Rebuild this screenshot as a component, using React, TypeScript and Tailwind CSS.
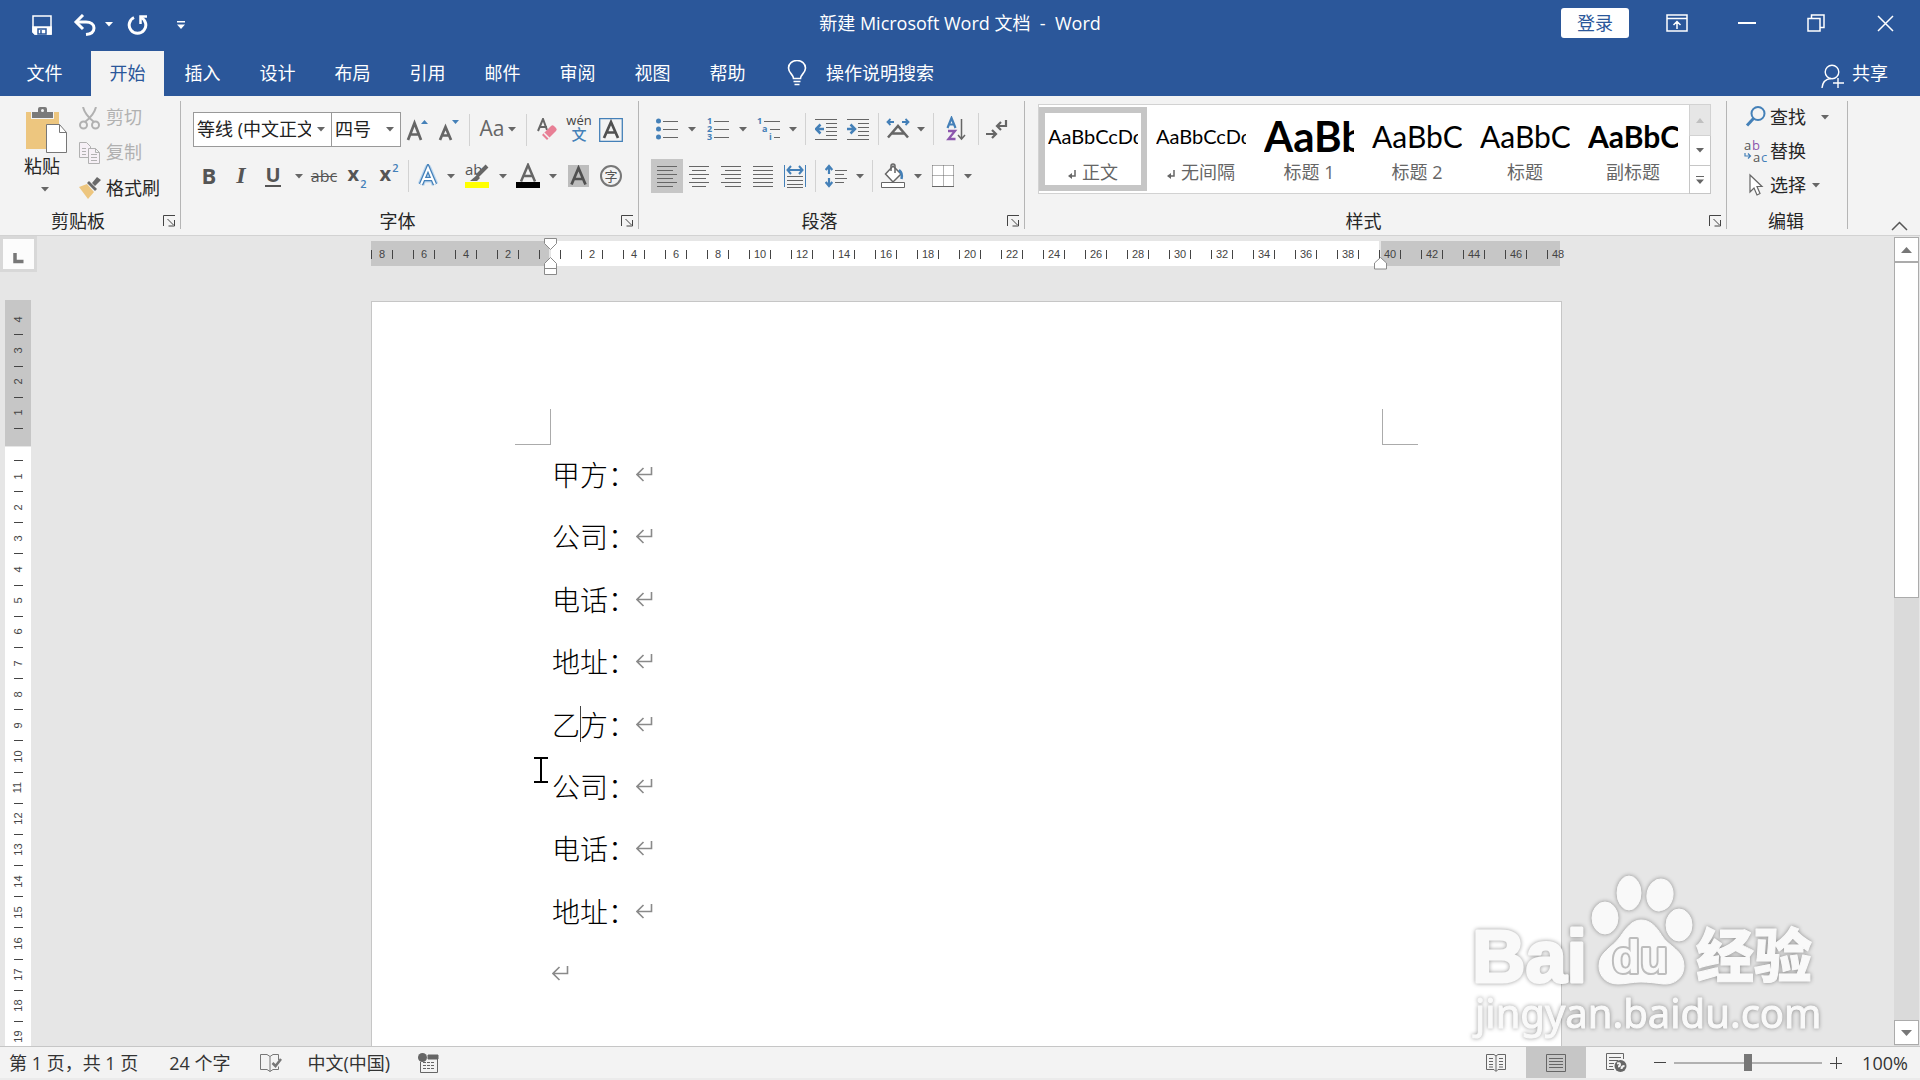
import type { ReactNode } from "react";

const TABS = ["开始", "插入", "设计", "布局", "引用", "邮件", "审阅", "视图", "帮助"];

const PARAGRAPHS = ["甲方：", "公司：", "电话：", "地址：", "乙方：", "公司：", "电话：", "地址：", ""];

const STYLES = [
  { name: "正文", mark: true, sample: "AaBbCcDd", look: "text-[20px]" },
  { name: "无间隔", mark: true, sample: "AaBbCcDd", look: "text-[20px]" },
  { name: "标题 1", mark: false, sample: "AaBb", look: "text-[42px] font-bold" },
  { name: "标题 2", mark: false, sample: "AaBbC", look: "text-[30px]" },
  { name: "标题", mark: false, sample: "AaBbC", look: "text-[30px]" },
  { name: "副标题", mark: false, sample: "AaBbC", look: "text-[30px] font-bold" },
];

// one cell per character unit, numbers on every second one
const H_CELLS = Array.from({ length: 57 }, (_, i) => i - 8);
const V_TOP = [4, 3, 2, 1];
const V_BODY = Array.from({ length: 19 }, (_, i) => i + 1);

const GREY = "#666666";
const BLUE = "#4480b8";

function Caret({ className = "text-[#666666]" }: { className?: string }) {
  return (
    <svg width="8" height="5" viewBox="0 0 8 5" className={className} aria-hidden="true">
      <path d="M0 0h8L4 4.5z" fill="currentColor" />
    </svg>
  );
}

function Tool({ label, w = "w-8", active = false, children }: { label: string; w?: string; active?: boolean; children: ReactNode }) {
  return (
    <button
      type="button"
      aria-label={label}
      className={`flex h-[34px] shrink-0 items-center justify-center ${w} ${active ? "bg-[#c6c6c6]" : "hover:bg-[#d5d5d5]"}`}
    >
      {children}
    </button>
  );
}

function More({ label, w = "w-4" }: { label: string; w?: string }) {
  return (
    <Tool label={`${label}选项`} w={w}>
      <Caret />
    </Tool>
  );
}

function Sep() {
  return <span className="mx-1 h-8 w-px shrink-0 bg-[#d2d2d2]" />;
}

function Icon({ children, w = 24, h = 24 }: { children: ReactNode; w?: number; h?: number }) {
  return (
    <svg width={w} height={h} viewBox={`0 0 ${w} ${h}`} fill="none" stroke={GREY} strokeWidth="1.5" aria-hidden="true" className="shrink-0">
      {children}
    </svg>
  );
}

// horizontal text lines given as [x1, x2, y]
function Lines({ rows }: { rows: number[][] }) {
  return <path d={rows.map(([a, b, y]) => `M${a} ${y}H${b}`).join("")} strokeWidth="1" shapeRendering="crispEdges" />;
}

function Group({ title, width, launcher = true, children }: { title: string; width: string; launcher?: boolean; children: ReactNode }) {
  return (
    <section aria-label={title} className={`flex h-32 flex-col border-r border-[#b5b5b5] ${width}`}>
      <div className="flex-1">{children}</div>
      <div className="flex h-4 items-center">
        <h2 className="flex-1 pr-0.5 text-center leading-4">{title}</h2>
        {launcher && (
          <button type="button" aria-label={`${title}设置`} className="flex w-[22px] justify-center">
            <svg width="13" height="12" viewBox="0 0 13 12" fill="none" stroke="#444" aria-hidden="true">
              <path d="M.5 11V.5H12M4.500 4l6 6M11.500 5v6H5.500" />
            </svg>
          </button>
        )}
      </div>
    </section>
  );
}

function TitleBar() {
  return (
    <div className="flex h-[51px] items-center text-white">
      <div className="flex flex-1 items-center pb-2.5">
        <div className="flex items-center pt-2 pl-8">
          <button type="button" aria-label="保存">
            <svg width="20" height="20" viewBox="0 0 20 20" fill="none" stroke="white" strokeWidth="1.5" aria-hidden="true">
              <path d="M1 1h18v18H3l-2-2z" />
              <path d="M1 12h18v7H3l-2-2z" fill="white" />
              <path d="M6 14h8v5H6zM9 15v4" stroke="#2b579a" strokeWidth="1.500" />
            </svg>
          </button>
          <button type="button" aria-label="撤消" className="ml-[21px]">
            <svg width="24" height="22" viewBox="0 0 24 22" fill="none" stroke="white" strokeWidth="3" aria-hidden="true">
              <path d="M3 8h10c5 0 8 2.500 8 6 0 4-3 6-8 6.500" />
              <path d="M10 1L3 8l7 7" />
            </svg>
          </button>
          <button type="button" aria-label="撤消选项" className="ml-2">
            <Caret className="text-white" />
          </button>
          <button type="button" aria-label="恢复" className="ml-3.5">
            <svg width="22" height="22" viewBox="0 0 22 22" fill="none" stroke="white" strokeWidth="3" aria-hidden="true">
              <path d="M7 3.500A8.300 8.300 0 1 0 14 3.500" />
              <path d="M20 2.500h-6.500V10" strokeWidth="2.500" />
            </svg>
          </button>
          <button type="button" aria-label="自定义快速访问工具栏" className="ml-7">
            <svg width="8" height="8" viewBox="0 0 8 8" fill="white" aria-hidden="true">
              <path d="M0 0h8v1.500H0zM0 3.500h8L4 8z" />
            </svg>
          </button>
        </div>
      </div>
      <h1 className="pb-1.5 text-lg whitespace-pre">新建 Microsoft Word 文档  -  Word</h1>
      <div className="flex flex-1 items-center justify-end pb-[5px]">
        <button type="button" className="h-[30px] w-[68px] rounded-[3px] bg-white text-lg leading-7 text-[#2b579a]">
          登录
        </button>
        <button type="button" aria-label="功能区显示选项" className="ml-[37px]">
          <svg width="22" height="18" viewBox="0 0 22 18" fill="none" stroke="white" strokeWidth="1.500" aria-hidden="true">
            <path d="M1 1h20v16H1zM1 4.500h20M11 15V7.500M7.500 11L11 7.500l3.500 3.500" />
          </svg>
        </button>
        <button type="button" aria-label="最小化" className="ml-[50px] flex h-6 w-[18px] items-center">
          <span className="h-[2px] w-full bg-white" />
        </button>
        <button type="button" aria-label="向下还原" className="ml-[51px]">
          <svg width="18" height="18" viewBox="0 0 18 18" fill="none" stroke="white" strokeWidth="1.500" aria-hidden="true">
            <path d="M1 4.500h12V17H1zM4.500 4.500V1H17v12.500h-4" />
          </svg>
        </button>
        <button type="button" aria-label="关闭" className="ml-[52px]">
          <svg width="17" height="17" viewBox="0 0 17 17" stroke="white" strokeWidth="1.500" aria-hidden="true">
            <path d="M1 1l15 15M16 1L1 16" />
          </svg>
        </button>
        <span className="w-[26px]" />
      </div>
    </div>
  );
}

function TabBar() {
  return (
    <nav aria-label="功能区选项卡" className="flex h-[45px] gap-0.5 text-lg text-white">
      <button type="button" className="w-[89px] pb-0.5">文件</button>
      {TABS.map((t, i) => (
        <button key={t} type="button" className={`w-[73px] pb-0.5 ${i === 0 ? "bg-[#f3f3f3] text-[#2b579a]" : ""}`}>
          {t}
        </button>
      ))}
      <button type="button" className="ml-[21px] flex items-center gap-[19px] pb-0.5">
        <svg width="20" height="26" viewBox="0 0 20 26" fill="none" stroke="white" strokeWidth="1.600" aria-hidden="true">
          <path d="M6.500 18.500c0-4-5-5.500-5-10.500a8.500 7.500 0 0 1 17 0c0 5-5 6.500-5 10.500zM6.500 21.500h7M7.500 24.500h5" />
        </svg>
        操作说明搜索
      </button>
      <button type="button" className="mr-8 ml-auto flex items-center gap-2 pb-0.5">
        <svg width="23" height="25" viewBox="0 0 23 25" fill="none" stroke="white" strokeWidth="1.400" aria-hidden="true" className="mt-2">
          <circle cx="11" cy="8" r="6.800" />
          <path d="M1 24c.5-6 3.500-9 9-9.500M17 14v10M12 19h11" />
        </svg>
        共享
      </button>
    </nav>
  );
}

function ClipboardGroup() {
  return (
    <Group title="剪贴板" width="w-[181px]">
      <div className="flex pt-1.5">
        <button type="button" className="ml-[23px] flex w-[46px] shrink-0 flex-col items-start">
          <svg width="44" height="46" viewBox="0 0 44 46" aria-hidden="true" className="ml-[3px]">
            <path d="M0 5h33v37H0z" fill="#edc67f" />
            <path d="M5 4h23v8H5z" fill="#f3f3f3" />
            <path d="M6 5h6V2q0-2 2-2h5q2 0 2 2v3h6v6H6z" fill="#7a7a7a" />
            <circle cx="16.500" cy="3.500" r="1.500" fill="#f3f3f3" />
            <path d="M20.500 17.500h13l7 8v20h-20z" fill="white" stroke="#777" />
            <path d="M33.500 17.500v8h7" fill="none" stroke="#777" />
          </svg>
          <span className="ml-px leading-[27px]">粘贴</span>
          <span className="ml-[18px] flex h-[18px] items-center">
            <Caret />
          </span>
        </button>
        <div className="ml-2.5 flex flex-col">
          <button type="button" disabled className="flex h-[35px] items-start gap-1.5 text-[#b1b1b1]">
            <svg width="21" height="23" viewBox="0 0 21 23" fill="none" stroke="#b1b1b1" strokeWidth="2" aria-hidden="true">
              <circle cx="4.500" cy="18" r="3.500" />
              <circle cx="16.500" cy="18" r="3.500" />
              <path d="M4 0q2 8 11 15M17 0q-2 8-11 15" />
            </svg>
            <span className="leading-5">剪切</span>
          </button>
          <button type="button" disabled className="flex h-[35px] items-start gap-1.5 text-[#b1b1b1]">
            <svg width="21" height="23" viewBox="0 0 21 23" fill="#f6f0f6" stroke="#b1b1b1" aria-hidden="true">
              <path d="M.5.5h7l4 4v11H.5zM3 6.500h4M3 9.500h4M3 12.500h4" />
              <path d="M9.500 6.500h7l4 4v11h-11zM16.500 6.500v4h4M12 12.500h6M12 15.500h6M12 18.500h6" />
            </svg>
            <span className="leading-5">复制</span>
          </button>
          <button type="button" className="flex h-[35px] items-start gap-[5px]">
            <svg width="22" height="23" viewBox="0 0 22 23" aria-hidden="true">
              <path d="M0 10l8-3 7 8-6 7z" fill="#edc67f" />
              <path d="M8 6l8 8 2-2-8-8zM13 6l5-6 4 3-6 6z" fill="#6a6a6a" />
            </svg>
            <span className="leading-[22px]">格式刷</span>
          </button>
        </div>
      </div>
    </Group>
  );
}

function Combo({ label, value, width }: { label: string; value: string; width: string }) {
  return (
    <div className={`relative h-[35px] shrink-0 ${width}`}>
      <select aria-label={label} className="h-full w-full appearance-none border border-[#999999] bg-white pr-5 pb-0.5 pl-[3px] text-[#222222]">
        <option>{value}</option>
      </select>
      <span className="pointer-events-none absolute top-[15px] right-[7px] flex">
        <Caret />
      </span>
    </div>
  );
}

function FontGroup() {
  return (
    <Group title="字体" width="w-[458px]">
      <div className="flex flex-col gap-3 pt-[11px] pl-3">
        <div className="flex items-center">
          <Combo label="字体名称" value="等线 (中文正文)" width="w-[139px]" />
          <Combo label="字号" value="四号" width="-ml-px w-[70px]" />
          <Tool label="增大字号">
            <Icon>
              <path d="M3 22L9.500 5 16 22M5.500 16.500h8.500" strokeWidth="2.700" />
              <path d="M16 6l3.500-4L23 6z" fill={BLUE} stroke="none" />
            </Icon>
          </Tool>
          <Tool label="减小字号">
            <Icon>
              <path d="M3 22L8.500 9 14 22M5.500 17.500h6.500" strokeWidth="2.700" />
              <path d="M15 2l3.500 4L22 2z" fill={BLUE} stroke="none" />
            </Icon>
          </Tool>
          <Sep />
          <Tool label="更改大小写" w="w-12">
            <span className="mr-1 pb-1 text-[21px] leading-6 text-[#666666]">Aa</span>
            <Caret />
          </Tool>
          <Sep />
          <Tool label="清除所有格式">
            <Icon w={22}>
              <path d="M2 13L7 1l4 11M4 9h7" strokeWidth="2" />
              <path d="M6 17L15 8q1.500-1.500 3 0l2 2q1.500 1.500 0 3L11 22z" fill="#e87f95" stroke="none" />
              <path d="M8 15l6 6" stroke="#f3f3f3" />
            </Icon>
          </Tool>
          <Tool label="拼音指南">
            <span className="flex flex-col items-center pb-1">
              <span className="text-[13px] leading-[13px] text-[#444444]">wén</span>
              <span className="text-[15px] leading-[15px] font-medium text-[#4480b8]">文</span>
            </span>
          </Tool>
          <Tool label="字符边框">
            <Icon>
              <path d="M.7.7h22.600v22.600H.7z" stroke={BLUE} strokeWidth="1.300" />
              <path d="M5 20L12 4l7 16M8 14.500h8" stroke="#505050" strokeWidth="2.700" />
            </Icon>
          </Tool>
        </div>
        <div className="flex items-center text-[#555555]">
          <Tool label="加粗">
            <b className="pb-0.5 text-[22px]">B</b>
          </Tool>
          <Tool label="倾斜">
            <i className="pb-0.5 font-['Liberation_Serif',serif] text-[24px] font-bold">I</i>
          </Tool>
          <Tool label="下划线">
            <span className="border-b-2 border-[#555555] text-[20px] leading-[20px] font-bold">U</span>
          </Tool>
          <More label="下划线" w="w-[19px]" />
          <Tool label="删除线">
            <s className="text-[16px]">abc</s>
          </Tool>
          <Tool label="下标">
            <span className="pb-1 pl-0.5 text-[20px] font-bold">x</span>
            <span className="mt-4 ml-px text-[11px] leading-4 font-semibold text-[#4480b8]">2</span>
          </Tool>
          <Tool label="上标">
            <span className="pb-1 pl-0.5 text-[20px] font-bold">x</span>
            <span className="mb-4 ml-px text-[11px] leading-4 font-semibold text-[#4480b8]">2</span>
          </Tool>
          <Sep />
          <Tool label="文本效果" w="w-[30px]">
            <Icon>
              <path d="M5 20.500L12 4l7 16.500M7.500 15h9" stroke="#bcd6ee" strokeWidth="7" strokeLinejoin="round" />
              <path d="M5 20.500L12 4l7 16.500M7.500 15h9" stroke={BLUE} strokeWidth="4.500" />
              <path d="M5 20.500L12 4l7 16.500M7.500 15h9" stroke="white" strokeWidth="2" />
            </Icon>
          </Tool>
          <More label="文本效果" />
          <Tool label="突出显示" w="w-9">
            <Icon w={24} h={26}>
              <text x="0" y="12" fontSize="15" fill="#555" stroke="none">ab</text>
              <path d="M22 3L12 13" strokeWidth="4" />
              <path d="M12 12l3 3-3 3H5z" fill={GREY} stroke="none" />
              <path d="M0 19h24v6H0z" fill="#ffff00" stroke="none" />
            </Icon>
          </Tool>
          <More label="突出显示" />
          <Tool label="字体颜色" w="w-[34px]">
            <Icon w={24} h={26}>
              <path d="M5 18.500L12 2l7 16.500M8 13h8" strokeWidth="2.500" />
              <path d="M0 19h24v6H0z" fill="black" stroke="none" />
            </Icon>
          </Tool>
          <More label="字体颜色" />
          <Tool label="字符底纹" w="w-[34px]">
            <Icon w={21} h={22}>
              <path d="M0 0h21v22H0z" fill="#bdbdbd" stroke="none" />
              <path d="M3.500 19.500L10.500 3l7 16.500M6 14h9" stroke="#505050" strokeWidth="2.700" />
            </Icon>
          </Tool>
          <Tool label="带圈字符">
            <span className="flex h-[22px] w-[22px] items-center justify-center rounded-full border-2 border-[#777777] text-[13px] leading-[14px]">
              字
            </span>
          </Tool>
        </div>
      </div>
    </Group>
  );
}

function ParagraphGroup() {
  return (
    <Group title="段落" width="w-[386px]">
      <div className="flex flex-col gap-[13px] pt-[11px] pl-3">
        <div className="flex items-center">
          <Tool label="项目符号">
            <Icon w={22}>
              <g fill={BLUE} stroke="none">
                <circle cx="2.500" cy="4" r="2.500" />
                <circle cx="2.500" cy="12" r="2.500" />
                <circle cx="2.500" cy="20" r="2.500" />
              </g>
              <Lines rows={[[7, 22, 4], [7, 22, 12], [7, 22, 20]]} />
            </Icon>
          </Tool>
          <More label="项目符号" w="w-[18px]" />
          <Tool label="编号" w="w-[34px]">
            <Icon w={22}>
              <g fill={BLUE} stroke="none" fontSize="9" fontWeight="700">
                <text x="0" y="7">1</text>
                <text x="0" y="15">2</text>
                <text x="0" y="23">3</text>
              </g>
              <Lines rows={[[7, 22, 4], [7, 22, 12], [7, 22, 20]]} />
            </Icon>
          </Tool>
          <More label="编号" />
          <Tool label="多级列表" w="w-[34px]">
            <Icon w={23}>
              <g fill={BLUE} stroke="none" fontSize="9" fontWeight="700">
                <text x="0" y="7">1</text>
                <text x="5" y="15">a</text>
                <text x="12" y="23">i</text>
              </g>
              <Lines rows={[[7, 23, 4], [13, 23, 12], [17, 23, 20]]} />
            </Icon>
          </Tool>
          <More label="多级列表" />
          <Sep />
          <Tool label="减少缩进量">
            <Icon w={22}>
              <Lines rows={[[0, 22, 2], [11, 22, 6], [11, 22, 10], [11, 22, 14], [11, 22, 18], [0, 22, 22]]} />
              <path d="M9 12H1M5.500 7.500L1 12l4.500 4.500" stroke={BLUE} strokeWidth="2.500" />
            </Icon>
          </Tool>
          <Tool label="增加缩进量">
            <Icon w={22}>
              <Lines rows={[[0, 22, 2], [11, 22, 6], [11, 22, 10], [11, 22, 14], [11, 22, 18], [0, 22, 22]]} />
              <path d="M0 12h8M3.500 7.500L8 12l-4.500 4.500" stroke={BLUE} strokeWidth="2.500" />
            </Icon>
          </Tool>
          <Sep />
          <Tool label="中文版式" w="w-[30px]">
            <Icon>
              <path d="M2 20.500L12 9l10 11.500M6 16.500h12" strokeWidth="2.500" />
              <path d="M8 5H1.500M4.500 2l-3 3 3 3M16 5h6.500M19.500 2l3 3-3 3" stroke={BLUE} strokeWidth="1.800" />
            </Icon>
          </Tool>
          <More label="中文版式" />
          <Sep />
          <Tool label="排序" w="w-9">
            <Icon w={20} h={26}>
              <path d="M1.500 12L5.500 2l4 10M3 8.500h5" stroke={BLUE} strokeWidth="2.200" />
              <path d="M2 15h7L2.500 23H9.500" stroke="#8c56ad" strokeWidth="2.300" />
              <path d="M15.500 3v20M12 19l3.500 4 3.500-4" strokeWidth="1.500" />
            </Icon>
          </Tool>
          <Sep />
          <Tool label="显示编辑标记" w="w-7">
            <Icon w={22}>
              <path d="M20 3v6h-8M15 5l-4 4 4 4" strokeWidth="2.200" />
              <path d="M0 17h9M6 13l4 4-4 4" strokeWidth="2.200" />
            </Icon>
          </Tool>
        </div>
        <div className="flex items-center">
          <Tool label="左对齐" active>
            <Icon w={20}>
              <Lines rows={[[0, 20, 2], [0, 16, 6], [0, 20, 10], [0, 16, 14], [0, 20, 18], [0, 16, 22]]} />
            </Icon>
          </Tool>
          <Tool label="居中">
            <Icon w={20}>
              <Lines rows={[[0, 20, 2], [3, 17, 6], [0, 20, 10], [3, 17, 14], [0, 20, 18], [3, 17, 22]]} />
            </Icon>
          </Tool>
          <Tool label="右对齐">
            <Icon w={20}>
              <Lines rows={[[0, 20, 2], [4, 20, 6], [0, 20, 10], [4, 20, 14], [0, 20, 18], [4, 20, 22]]} />
            </Icon>
          </Tool>
          <Tool label="两端对齐">
            <Icon w={20}>
              <Lines rows={[[0, 20, 2], [0, 20, 6], [0, 20, 10], [0, 20, 14], [0, 20, 18], [0, 20, 22]]} />
            </Icon>
          </Tool>
          <Tool label="分散对齐">
            <Icon w={22}>
              <path d="M.5 1v22M21.500 1v22" stroke={BLUE} strokeWidth="1" />
              <path d="M4 6h14M7 2L3.500 6 7 10M15 2l3.500 4L15 10" stroke={BLUE} strokeWidth="2" />
              <Lines rows={[[3, 19, 12], [3, 19, 16], [3, 19, 20], [3, 19, 23]]} />
            </Icon>
          </Tool>
          <Sep />
          <Tool label="行距">
            <Icon w={22}>
              <path d="M4 3v7M.7 6L4 2l3.300 4M4 14v7M.7 18L4 22l3.300-4" stroke={BLUE} strokeWidth="2.200" />
              <Lines rows={[[10, 22, 6], [10, 19, 10], [10, 22, 14], [10, 19, 18]]} />
            </Icon>
          </Tool>
          <More label="行距" />
          <Sep />
          <Tool label="底纹">
            <Icon h={26}>
              <path d="M12 3l8 8-8 8-7.500-8z" fill="white" />
              <path d="M10 8V3q0-2 2-2t2 2v7" />
              <path d="M18 7q4 3 2.500 9" stroke={BLUE} strokeWidth="2.500" />
              <path d="M.5 19.500h23v5H.5z" fill="white" strokeWidth="1" />
            </Icon>
          </Tool>
          <More label="底纹" w="w-[18px]" />
          <Tool label="边框">
            <Icon w={22}>
              <path d="M.5 1.500h21v21H.5z" fill="white" stroke="none" />
              <path d="M.5 1.500h21M.5 11.500h21M.5 1.500v21M11.500 1.500v21M21.500 1.500v21" strokeWidth="1" strokeDasharray="1 1" />
              <path d="M0 22.500h22" strokeWidth="1" />
            </Icon>
          </Tool>
          <More label="边框" w="w-[18px]" />
        </div>
      </div>
    </Group>
  );
}

function StylesGroup() {
  return (
    <Group title="样式" width="min-w-0 flex-1">
      <div className="flex pt-[3px] pr-[15px] pl-[13px]">
        <div className="flex h-[90px] min-w-0 flex-1 overflow-hidden border border-r-0 border-[#d2d2d2] bg-white py-0.5">
          {STYLES.map((s, i) => (
            <button
              key={s.name}
              type="button"
              aria-pressed={i === 0}
              className={`flex w-[108px] shrink-0 flex-col items-center border-[6px] ${i === 0 ? "border-[#c6c6c6]" : "border-transparent"}`}
            >
              <span className={`flex h-[46px] w-[90px] items-center overflow-hidden font-['Lato',sans-serif] whitespace-nowrap text-black ${s.look}`}>
                {s.sample}
              </span>
              <span className="flex items-center gap-1.5 leading-[26px] text-[#666666]">
                {s.mark && (
                  <svg width="8" height="12" viewBox="0 0 8 12" fill="none" stroke="#666" strokeWidth="1.500" aria-hidden="true" className="mt-1.5">
                    <path d="M7 1v6H2" />
                    <path d="M4 4v6L0 7z" fill="#666" stroke="none" />
                  </svg>
                )}
                {s.name}
              </span>
            </button>
          ))}
        </div>
        <div className="flex w-[22px] flex-col">
          <button type="button" disabled aria-label="上一行" className="flex h-8 items-center justify-center border border-[#d2d2d2] bg-[#e6e6e6]">
            <svg width="8" height="5" viewBox="0 0 8 5" fill="#c0c0c0" aria-hidden="true">
              <path d="M0 5h8L4 0z" />
            </svg>
          </button>
          <button type="button" aria-label="下一行" className="flex h-[29px] items-center justify-center border-x border-[#c6c6c6] bg-white">
            <Caret />
          </button>
          <button type="button" aria-label="其他样式" className="flex h-[29px] items-center justify-center border border-[#c6c6c6] bg-white">
            <svg width="8" height="8" viewBox="0 0 8 8" fill="#666" aria-hidden="true">
              <path d="M0 0h8v1H0zM0 3.500h8L4 8z" />
            </svg>
          </button>
        </div>
      </div>
    </Group>
  );
}

function EditGroup() {
  return (
    <Group title="编辑" width="w-[121px]" launcher={false}>
      <div className="flex flex-col items-start pl-[17px]">
        <button type="button" className="flex h-[34px] items-center pb-0.5">
          <Icon>
            <circle cx="14" cy="8.500" r="6.500" stroke={BLUE} strokeWidth="2" />
            <path d="M9.500 13.500L3 20.500" stroke={BLUE} strokeWidth="3" />
          </Icon>
          <span className="mr-[15px] ml-0.5">查找</span>
          <Caret />
        </button>
        <button type="button" className="flex h-[34px] items-center pb-0.5">
          <Icon>
            <g fontSize="13" stroke="none" fill="#555">
              <text x="0" y="11">a</text>
              <text x="8" y="11" fill="#8c56ad">b</text>
              <text x="9" y="23">a</text>
              <text x="17" y="23" fill={BLUE}>c</text>
            </g>
            <path d="M1 14v3h5M4 14.500l2.500 2.500L4 19.500" stroke={BLUE} strokeWidth="1.200" />
          </Icon>
          <span className="ml-0.5">替换</span>
        </button>
        <button type="button" className="flex h-[34px] items-center pb-0.5">
          <Icon>
            <path d="M6 2v17l4-4 3 7 3-1.500-3-7h5z" fill="white" strokeWidth="1.200" />
          </Icon>
          <span className="mr-1.5 ml-0.5">选择</span>
          <Caret />
        </button>
      </div>
    </Group>
  );
}

function HRuler() {
  return (
    <div className="relative mx-auto mt-[5px] grid h-[25px] w-[1191px] shrink-0">
      <div className="col-start-1 row-start-1 flex">
        <div className="w-[178px] bg-[#c6c6c6]" />
        <div className="ml-0.5 w-[828px] bg-white" />
        <div className="ml-0.5 w-[179px] bg-[#c6c6c6]" />
      </div>
      <div className="col-start-1 row-start-1 flex items-center pt-0.5 font-['Liberation_Sans',sans-serif] text-[11px] leading-[9px] text-[#444444]">
        {H_CELLS.map((n) => (
          <span key={n} className="flex h-[9px] w-[21px] shrink-0 justify-center border-l border-[#444444]">
            {n !== 0 && n % 2 === 0 ? Math.abs(n) : ""}
          </span>
        ))}
      </div>
      <svg width="13" height="38" viewBox="0 0 13 38" fill="white" stroke="#8a8a8a" className="absolute -top-[3px] left-[173px]" aria-hidden="true">
        <path d="M.5.500h12v5l-6 6-6-6zM.5 36.500v-11l6-6 6 6v11zM.5 30.500h12" />
      </svg>
      <svg width="13" height="13" viewBox="0 0 13 13" fill="white" stroke="#8a8a8a" className="absolute -bottom-1 left-[1003px]" aria-hidden="true">
        <path d="M.5 12v-6l6-5.500 6 5.500v6z" />
      </svg>
    </div>
  );
}

function VCell({ n }: { n: number }) {
  return (
    <span className="flex min-h-0 flex-1 items-center justify-center">
      <span className="-rotate-90">{n}</span>
    </span>
  );
}

function VTick() {
  return <span className="mx-auto h-px w-[9px] shrink-0 bg-[#444444]" />;
}

function VRuler() {
  return (
    <div className="flex w-[39px] shrink-0 flex-col overflow-hidden">
      <button type="button" aria-label="制表符" className="h-9 w-[37px] shrink-0 border-[3px] border-[#d8d8d8] bg-[#fcfcfc]">
        <svg width="31" height="28" viewBox="0 0 31 28" fill="none" stroke="#777" strokeWidth="3.500" aria-hidden="true">
          <path d="M12 13v8.500h8.500" />
        </svg>
      </button>
      <div className="mt-7 ml-[5px] flex min-h-0 w-[26px] flex-1 flex-col font-['Liberation_Sans',sans-serif] text-[11px] leading-none text-[#444444]">
        <div className="flex h-[146px] shrink-0 flex-col bg-[#c6c6c6] pt-1 pb-[17px]">
          {V_TOP.map((n) => (
            <div key={n} className="flex flex-1 flex-col">
              <VCell n={n} />
              <VTick />
            </div>
          ))}
        </div>
        <div className="mt-px flex min-h-0 flex-1 flex-col bg-white pt-[13px]">
          <div className="-mb-1.5 flex min-h-0 flex-1 flex-col">
            {V_BODY.map((n) => (
              <div key={n} className="flex min-h-0 flex-1 flex-col">
                <VTick />
                <VCell n={n} />
              </div>
            ))}
          </div>
        </div>
      </div>
    </div>
  );
}

function Page() {
  return (
    <article className="relative mx-auto mt-[35px] min-h-0 w-[1191px] flex-1 overflow-hidden border border-b-0 border-[#c6c6c6] bg-white px-[143px]">
      <div className="flex h-[143px] items-end justify-between">
        <span className="h-9 w-9 border-r border-b border-[#ababab]" />
        <span className="h-9 w-9 border-b border-l border-[#ababab]" />
      </div>
      <div className="-mt-0.5 flex h-[561px] flex-col justify-between pl-[37px] font-['Noto_Sans_CJK_SC',sans-serif] text-[28px] leading-[62px] font-light text-black">
        {PARAGRAPHS.map((text, i) => (
          <p key={i} className="flex h-[62px] items-center">
            {i === 4 ? (
              <>
                {text[0]}
                <span className="-mr-px h-9 w-px bg-[#444444]" />
                {text.slice(1)}
              </>
            ) : (
              text
            )}
            <svg width="17" height="16" viewBox="0 0 17 16" fill="none" stroke="#8a8a8a" strokeWidth="1.600" aria-hidden="true">
              <path d="M15.500 1v7.500H1M7.500 2L1 8.500 7.500 15" />
            </svg>
          </p>
        ))}
      </div>
      <svg width="14" height="26" viewBox="0 0 14 26" stroke="black" strokeWidth="2" fill="none" className="absolute top-[455px] left-[162px]" aria-hidden="true">
        <path d="M0 1h14M0 25h14M7 1v24" />
      </svg>
    </article>
  );
}

function ScrollBar() {
  return (
    <div className="mt-px mr-px flex w-[25px] flex-col bg-[#dadada]">
      <button type="button" aria-label="向上滚动" className="flex h-[25px] items-center justify-center border border-[#ababab] bg-white">
        <svg width="11" height="6" viewBox="0 0 11 6" fill="#777" aria-hidden="true">
          <path d="M0 6h11L5.500 0z" />
        </svg>
      </button>
      <div className="h-[336px] border border-[#ababab] bg-white" />
      <button type="button" aria-label="向下滚动" className="mt-auto mb-px flex h-[25px] items-center justify-center border border-[#ababab] bg-white">
        <svg width="11" height="6" viewBox="0 0 11 6" fill="#777" aria-hidden="true">
          <path d="M0 0h11L5.500 6z" />
        </svg>
      </button>
    </div>
  );
}

function Watermark() {
  return (
    <svg
      width="370"
      height="175"
      viewBox="0 0 370 175"
      fill="#f9f9f9"
      stroke="#f9f9f9"
      strokeWidth="1"
      strokeLinejoin="round"
      className="pointer-events-none absolute right-[90px] bottom-[35px] drop-shadow-[0_0_2px_rgba(0,0,0,0.4)]"
      aria-hidden="true"
    >
      <text x="12" y="112" fontSize="74" fontWeight="700" fontFamily="Liberation Sans" strokeWidth="3">Bai</text>
      <ellipse cx="145" cy="48" rx="13" ry="16" />
      <ellipse cx="169" cy="23" rx="12" ry="17" />
      <ellipse cx="200" cy="25" rx="13" ry="16" transform="rotate(10 200 25)" />
      <ellipse cx="219" cy="55" rx="13" ry="16" />
      <path d="M181 50C190 50 196 56 202 66C208 76 224 80 224 96C224 108 214 115 203 114C195 113 188 112 181 112C172 112 166 114 158 114C146 114 139 106 139 96C139 82 152 78 160 67C166 58 172 50 181 50Z" />
      <text x="152" y="103" fontSize="46" fontWeight="700" fontFamily="Liberation Sans" stroke="#bdbdbd" strokeWidth="4" paintOrder="stroke">du</text>
      <text x="236" y="107" fontSize="58" fontWeight="900" fontFamily="Noto Sans CJK SC">经验</text>
      <text x="15" y="158" fontSize="40" fontFamily="Noto Sans">jingyan.baidu.com</text>
    </svg>
  );
}

function StatusBar() {
  return (
    <footer className="flex h-[34px] shrink-0 items-center border-t border-b-2 border-t-[#c6c6c6] border-b-[#ebebeb] pl-[9px] text-[#333333]">
      <button type="button">第 1 页，共 1 页</button>
      <button type="button" className="ml-[31px]">24 个字</button>
      <button type="button" aria-label="校对" className="ml-[29px]">
        <svg width="22" height="20" viewBox="0 0 22 20" fill="none" stroke="#777" aria-hidden="true">
          <path d="M18.500 7V1.500H13l-3 2-3-2H.5v15H7l3 2 3-2h5.500v-3M10 3.500v15" />
          <path d="M12.500 10l3 3 5.500-7" strokeWidth="2.500" />
        </svg>
      </button>
      <button type="button" className="ml-[26px]">中文(中国)</button>
      <button type="button" aria-label="宏" className="ml-7">
        <svg width="21" height="20" viewBox="0 0 21 20" fill="none" stroke="#666" aria-hidden="true">
          <path d="M10 2h10v4H10z" fill="#666" />
          <path d="M2.500 9v10.500h17V6" />
          <path d="M5 9.500h12M5 12.500h12M5 15.500h12" strokeDasharray="3 1" />
          <circle cx="4.500" cy="4.500" r="4.500" fill="#666" stroke="none" />
        </svg>
      </button>
      <div className="ml-auto flex h-full items-center">
        <button type="button" aria-label="阅读视图" className="flex w-[60px] justify-center">
          <svg width="20" height="18" viewBox="0 0 20 18" fill="none" stroke="#666" aria-hidden="true">
            <path d="M.5.500H8l2 1.500 2-1.500h7.500v15H12l-2 2-2-2H.500zM10 2v15M3 4.500h4M3 7.500h4M3 10.500h4M13 4.500h4M13 7.500h4M13 10.500h4M3 13h4M13 13h4" />
          </svg>
        </button>
        <button type="button" aria-label="页面视图" aria-pressed="true" className="flex h-full w-[60px] items-center justify-center bg-[#c6c6c6]">
          <svg width="20" height="18" viewBox="0 0 20 18" fill="none" stroke="#666" aria-hidden="true">
            <path d="M.5.500h19v17H.500zM3 4.500h14M3 7.500h14M3 10.500h14M3 13.500h14" />
          </svg>
        </button>
        <button type="button" aria-label="Web 版式视图" className="flex w-[60px] justify-center">
          <svg width="21" height="19" viewBox="0 0 21 19" fill="none" stroke="#666" aria-hidden="true">
            <path d="M17.500 6V.500H.500v16H8M3 4.500h12M3 7.500h9M3 10.500h5M3 13.500h4" />
            <circle cx="14.500" cy="13" r="6" fill="#666" stroke="none" />
            <path d="M11 10.500q3-1 3 1t-2 2M15.500 16q0-3 3-3" stroke="#f3f3f3" strokeWidth="2" />
          </svg>
        </button>
        <button type="button" aria-label="缩小" className="ml-2 flex h-4 w-3 items-center">
          <span className="h-px w-full bg-[#444444]" />
        </button>
        <input
          type="range"
          aria-label="缩放"
          min="10"
          max="190"
          defaultValue="100"
          className="mx-2 h-5 w-[148px] appearance-none bg-[linear-gradient(#b1b1b1,#b1b1b1)] bg-[length:100%_2px] bg-center bg-no-repeat [&::-webkit-slider-thumb]:h-[17px] [&::-webkit-slider-thumb]:w-2 [&::-webkit-slider-thumb]:appearance-none [&::-webkit-slider-thumb]:bg-[#777777]"
        />
        <button type="button" aria-label="放大">
          <svg width="12" height="12" viewBox="0 0 12 12" stroke="#444" aria-hidden="true" shapeRendering="crispEdges">
            <path d="M0 6h12M6 0v12" />
          </svg>
        </button>
        <button type="button" className="ml-2 w-[70px] text-center">100%</button>
      </div>
    </footer>
  );
}

export default function App() {
  return (
    <div className="relative flex h-screen flex-col overflow-hidden bg-[#f3f3f3] font-['Open_Sans','Noto_Sans_CJK_SC',sans-serif] text-lg leading-6 text-[#262626]">
      <header className="shrink-0 bg-[#2b579a]">
        <TitleBar />
        <TabBar />
      </header>
      <div className="flex h-[140px] shrink-0 border-b border-[#d2d2d2] pt-[5px]">
        <ClipboardGroup />
        <FontGroup />
        <ParagraphGroup />
        <StylesGroup />
        <EditGroup />
        <div className="flex w-[72px] items-end justify-end pr-3 pb-1">
          <button type="button" aria-label="折叠功能区">
            <svg width="17" height="10" viewBox="0 0 17 10" fill="none" stroke="#555" strokeWidth="1.500" aria-hidden="true">
              <path d="M1 9l7.500-7.500L16 9" />
            </svg>
          </button>
        </div>
      </div>
      <div className="flex min-h-0 flex-1 bg-[#e6e6e6]">
        <VRuler />
        <main className="flex min-w-0 flex-1 flex-col">
          <HRuler />
          <Page />
        </main>
        <ScrollBar />
      </div>
      <StatusBar />
      <Watermark />
    </div>
  );
}
